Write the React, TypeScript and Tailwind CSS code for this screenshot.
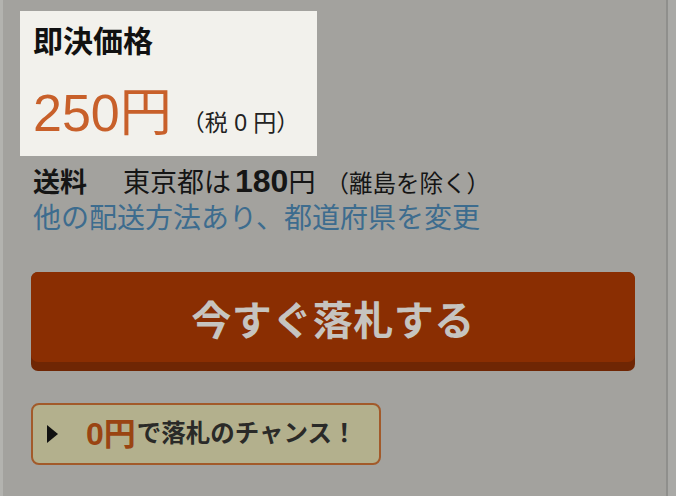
const font = "font-['Liberation_Sans','Noto_Sans_CJK_JP',sans-serif]";

export default function App() {
  return (
    <div className={`flex h-[496px] w-[676px] overflow-hidden bg-[#a3a29e] ${font}`}>
      <div className="w-[3px] shrink-0 bg-[#b3b3af]" />
      <div className="flex w-[663px] shrink-0 flex-col pl-[17px] pt-[11px]">
        <div className="flex h-[145px] w-[297px] flex-col bg-[#f2f1ec] px-[13px] pt-[13px]">
          <div className="text-[30px] font-bold leading-[36px] text-[#111]">即決価格</div>
          <div className="mt-[25px] flex items-baseline">
            <span className="text-[52px] leading-[56px] text-[#c8602a]">250円</span>
            <span className="ml-[10px] text-[23px] leading-[26px] text-[#222]">（税 0 円）</span>
          </div>
        </div>
        <div className="ml-[13px] mt-[8px] flex items-baseline whitespace-nowrap text-[#151515]">
          <span className="text-[27px] font-bold leading-[34px]">送料</span>
          <span className="ml-[36px] text-[27px] leading-[34px]">
            東京都は<span className="ml-[4px] text-[32px] font-bold">180</span>円
          </span>
          <span className="ml-[10px] text-[23.5px] leading-[28px]">（離島を除く）</span>
        </div>
        <div className="ml-[13px] mt-[1px] whitespace-nowrap text-[28px] leading-[36px] text-[#3d6c8e]">
          他の配送方法あり、都道府県を変更
        </div>
        <div className="ml-[11px] mt-[35px] flex h-[99px] w-[604px] flex-col rounded-[7px] bg-[#6f2604] pb-[9px]">
          <div className="flex flex-1 items-center justify-center rounded-[7px] bg-[#8a2e02] pt-[8px]">
            <span className="text-[40px] font-bold leading-[48px] tracking-[0.5px] text-[#c6c4c0]">
              今すぐ落札する
            </span>
          </div>
        </div>
        <div className="ml-[11px] mt-[32px] flex h-[62px] w-[350px] items-center rounded-[8px] border-2 border-[#a25a2a] bg-[#b3b08d] pl-[14px]">
          <svg width="11" height="18" viewBox="0 0 11 18" className="shrink-0">
            <polygon points="0,0 11,9 0,18" fill="#111" />
          </svg>
          <span className="ml-[28px] text-[32px] font-bold leading-[36px] text-[#9a4412]">0円</span>
          <span className="ml-[1px] text-[24.5px] font-bold leading-[30px] text-[#2a2a28]">
            で落札のチャンス！
          </span>
        </div>
      </div>
      <div className="w-[2px] shrink-0 bg-[#8f8f8c]" />
      <div className="flex-1 bg-[#a9a9a6]" />
    </div>
  );
}
